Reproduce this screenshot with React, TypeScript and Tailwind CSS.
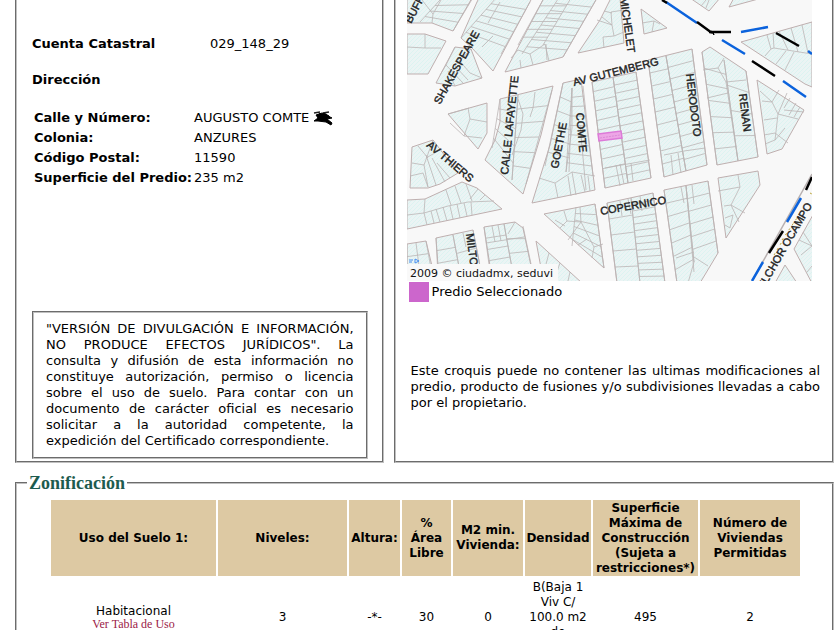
import React from "react";

type Point = [number, number];

// [start of side A, end of side A, start of side B, end of side B, number of lots]
type Strip = [Point, Point, Point, Point, number];

const blocks = [
  "407,-2 472,-2 453,31 432,23 407,23",
  "407,34 425,34 446,41 428,74 407,74",
  "455,47 471,49 482,78 455,86 436,83",
  "477,2 479,-2 532,-2 493,71 472,48 461,38",
  "544,-2 597,-2 563,57 541,63 505,72",
  "578,53 600,20 611,-2 620,-2 624,43",
  "641,9 667,28 644,34",
  "690,-2 709,11 720,-2",
  "729,7 734,-2 762,-2",
  "741,42 812,22 812,87 805,84",
  "448,114 487,103 487,133 478,149",
  "500,99 553,86 541,135 523,194 485,160 495,140 500,122",
  "563,83 581,79 586,120 595,190 532,203 550,145",
  "592,82 636,72 651,178 605,188",
  "648,60 692,49 707,165 664,177",
  "702,52 710,47 746,71 758,157 717,165",
  "757,80 804,110 782,149 767,154",
  "718,178 758,171 760,185 726,238",
  "664,190 708,181 718,253 700,283 677,283",
  "607,203 653,193 665,283 617,283",
  "544,214 595,204 604,268",
  "536,241 582,283 556,283 541,268",
  "484,227 515,222 523,228 531,266 490,266",
  "436,238 473,230 480,266 438,266",
  "407,244 426,241 432,266 407,266",
  "407,200 425,199 462,182 477,188 502,209 407,229",
  "412,147 433,140 458,173 440,184 428,188 410,188",
  "814,213 794,249 814,287",
  "785,265 797,283 775,283",
];

const strips: Strip[] = [
  [[440, 0], [420, 22], [474, -4], [453, 31], 4],
  [[496, -2], [461, 38], [530, 2], [501, 54], 7],
  [[560, -4], [522, 54], [596, 0], [563, 57], 8],
  [[544, -2], [518, 45], [571, -2], [543, 45], 6],
  [[500, 99], [492, 148], [518, 95], [512, 180], 5],
  [[518, 95], [512, 180], [552, 90], [526, 184], 6],
  [[563, 83], [545, 166], [572, 88], [569, 172], 6],
  [[572, 88], [566, 172], [583, 86], [593, 176], 9],
  [[592, 82], [605, 188], [613, 77], [628, 183], 11],
  [[613, 77], [628, 183], [636, 72], [651, 178], 13],
  [[648, 60], [664, 177], [666, 56], [686, 171], 9],
  [[666, 56], [686, 171], [692, 49], [707, 165], 10],
  [[702, 52], [717, 165], [724, 60], [738, 161], 7],
  [[724, 60], [738, 161], [746, 71], [758, 157], 4],
  [[664, 190], [677, 283], [686, 186], [694, 272], 7],
  [[686, 186], [694, 262], [708, 181], [718, 253], 6],
  [[607, 203], [617, 283], [631, 198], [640, 283], 5],
  [[631, 198], [640, 283], [653, 193], [665, 283], 13],
  [[484, 227], [490, 272], [504, 224], [512, 268], 4],
  [[504, 224], [512, 268], [523, 226], [531, 264], 3],
  [[436, 238], [438, 276], [453, 235], [460, 272], 3],
  [[453, 235], [460, 272], [473, 230], [480, 266], 2],
  [[407, 244], [407, 282], [426, 241], [433, 279], 3],
  [[576, 207], [572, 246], [595, 204], [604, 268], 6],
];

const lotLines = [
  "M422 0L433 14L432 23M433 14L441 0",
  "M425 34V48M407 47L425 48L441 48",
  "M455 47L446 65L463 83M471 49L455 66L468 80M446 65L440 75M458 59L470 73L482 78M448 71L455 86",
  "M482 47L493 36M500 2L488 23",
  "M518 50L530 54L533 65M518 50L511 58M530 54L545 44L549 61M546 44L547 60M521 68L520 60",
  "M597 20L612 25L614 36L603 37L604 48M612 25L611 12L624 10M614 36L624 32M602 17L612 25M612 13L604 11",
  "M642 23L654 21L652 32M654 21L660 24",
  "M701 6L706 0M709 0L706 8",
  "M767 35L771 49L765 56M773 33L774 48L771 49M774 48L812 54M786 51L776 64M794 52L785 70M779 31L788 50M791 28L798 52M802 25L808 53",
  "M468 108L470 119L464 136M470 119L487 122M464 136L450 123M464 136L482 138M469 108L448 114",
  "M518 99L523 114L521 130L512 155M535 92L533 108L530 117",
  "M580 125L586 190M572 88V128L566 172M539 178L555 183L558 198M555 183L572 172L595 176M572 172L576 195M568 176L571 196M581 175L585 192M588 176L590 191",
  "M613 77L628 183M605 168L650 160M620 164L624 184M616 165L620 186M631 163L633 181",
  "M666 56L686 171M664 155L684 151L705 148M671 155L673 175M678 153L681 173",
  "M703 70L718 68L724 58M718 68L726 82L746 80M726 82L738 161M707 98L728 93",
  "M762 101L772 102L779 90M772 102L778 114L775 140L785 128M778 114L798 119M778 114L787 93M784 110L804 112M764 135L775 133L788 143M764 120L777 118M790 98L784 108M796 103L789 115M800 107L794 117M760 91L772 102M765 144L775 140",
  "M718 191L740 187L738 175M740 187L731 205M731 205L745 213M724 206L731 205L739 222M725 218L733 215L730 228M725 225L730 228",
  "M681 187L684 203M692 185L694 204M686 186L694 262L688 283M694 257L708 266M676 258L694 252",
  "M620 201L622 216M628 199L631 214M640 196L642 211",
  "M564 211L567 221L581 222L580 207M567 221L560 228M581 222L568 240M581 222L594 247L592 258M594 247L603 244M578 245L587 239M555 220L565 226",
  "M549 253L545 268M560 263L554 280M570 272L568 281",
  "M492 226L495 242M498 225L501 241M515 222L508 234M486 243L524 237",
  "M463 233L466 247M416 243L419 266",
  "M425 199L424 213L407 215M424 213L448 206L468 202L494 201M446 190L451 205M455 186L461 203M466 184L472 201M478 189L470 199M485 195L480 200M424 213L427 225M431 211L434 223M436 209L440 222M443 207L447 221M450 206L453 219M457 204L460 218M464 203L467 216M471 202L472 215",
  "M412 163L424 165L433 140M410 176L423 173L428 187M424 165L428 187M426 155L436 185M432 158L445 182M440 150L426 158M418 146L428 158M437 163L450 178",
  "M803 232L812 246L801 255M799 240L812 246M807 272L812 266",
];

const labels = [
  { name: "BUFFON", x: 411, y: 24, angle: -62 },
  { name: "SHAKESPEARE", x: 440, y: 105, angle: -61 },
  { name: "MICHELET", x: 620, y: -2, angle: 82 },
  { name: "AV GUTEMBERG", x: 574, y: 86, angle: -14 },
  { name: "CALLE LAFAYETTE", x: 508, y: 175, angle: -84 },
  { name: "GOETHE", x: 558, y: 169, angle: -79 },
  { name: "COMTE", x: 576, y: 113, angle: 85 },
  { name: "HERODOTO", x: 686, y: 74, angle: 83 },
  { name: "RENAN", x: 739, y: 94, angle: 83 },
  { name: "AV THIERS", x: 426, y: 146, angle: 40 },
  { name: "COPERNICO", x: 601, y: 215, angle: -10 },
  { name: "MILTON", x: 466, y: 234, angle: 82 },
  { name: "MELCHOR OCAMPO", x: 759, y: 298, angle: -60 },
];

const lerp = (a: Point, b: Point, t: number): string =>
  `${a[0] + (b[0] - a[0]) * t} ${a[1] + (b[1] - a[1]) * t}`;

const stripPath = ([a1, a2, b1, b2, count]: Strip) => {
  let d = `M${a1.join(" ")}L${a2.join(" ")}M${b1.join(" ")}L${b2.join(" ")}`;
  for (let i = 1; i < count; i++) {
    d += `M${lerp(a1, a2, i / count)}L${lerp(b1, b2, i / count)}`;
  }
  return d;
};

const ParcelMap: React.FC = () => (
  <svg
    viewBox="407 0 405 281"
    role="img"
    aria-label="Croquis del predio"
    className="block w-full max-w-[405px] bg-[#f8f8f8]"
  >
    <defs>
      <pattern id="hatch" width="4" height="4" patternUnits="userSpaceOnUse">
        <rect width="4" height="4" fill="#ebf4f4" />
        <path d="M0 4L4 0" stroke="#dcf3f1" strokeWidth="1" />
      </pattern>
    </defs>

    {/* Manzanas y lotes */}
    <g fill="url(#hatch)" stroke="#bfafaf" strokeWidth="1">
      {blocks.map((points) => (
        <polygon key={points} points={points} />
      ))}
    </g>
    <g fill="none" stroke="#bbb5b5" strokeWidth="0.8">
      {strips.map((strip, i) => (
        <path key={i} d={stripPath(strip)} />
      ))}
      {lotLines.map((d) => (
        <path key={d} d={d} />
      ))}
    </g>

    {/* Predio seleccionado */}
    <polygon points="598,134 621,131 622,138 599,141" fill="#eda6e6" stroke="#dc7ad8" strokeWidth="1.5" />
    <path d="M600 138L620 135" stroke="#d98bd6" strokeDasharray="2 1" />

    {/* Límites */}
    <path d="M812 174L752 281" stroke="#b8b0b0" strokeWidth="1.5" />
    <g fill="none" strokeWidth="2.5">
      <path
        d="M666 2L697 23M741 32L768 27M722 40L745 54M783 81L806 97M808 51L812 54M801 198L787 222M763 262L752 281"
        stroke="#0b62dc"
      />
      <path
        d="M662 0L667 3M697 22L712 33M709 32H731M776 33L799 46M752 61L775 76M812 177L806 190M783 231L769 253"
        stroke="#000"
      />
    </g>
    <path d="M711 31L714 35L713 32Z" stroke="#000" />
    <path d="M810 193L812 194M782 240L797 218M774 255L783 240" stroke="#b9a43a" strokeDasharray="2 4" />

    <g className="font-['Liberation_Sans'] text-[11px]" fill="#222" stroke="#222" strokeWidth="0.4">
      {labels.map(({ name, x, y, angle }) => (
        <text key={name} transform={`translate(${x} ${y}) rotate(${angle})`}>
          {name}
        </text>
      ))}
    </g>

    <path d="M409 260H413M409 262H412M415 259L419 261L415 263Z" stroke="#4a90f0" fill="none" />
    <rect x="407" y="264" width="151" height="17" fill="#f9f9f9" />
    <text x="410" y="277" fill="#111" className="font-['DejaVu_Sans'] text-[11px]">
      2009 © ciudadmx, seduvi
    </text>
  </svg>
);

const Scribble: React.FC = () => (
  <svg viewBox="0 0 20 16" aria-hidden="true" className="inline-block h-4 w-5 align-middle">
    <path
      d="M1 3L7 2M10 3L16 2M16 6H12M7 3L5 7"
      fill="none"
      stroke="#222"
      strokeWidth="1.5"
    />
    <path
      d="M3 5L9 3L13 4L17 7L19 8L14 9L19 13L18 15L13 12L5 11L1 11L5 8Z"
      fill="#000"
      stroke="#000"
    />
  </svg>
);

const address = [
  { label: "Calle y Número:", value: "AUGUSTO COMTE", hidden: true },
  { label: "Colonia:", value: "ANZURES" },
  { label: "Código Postal:", value: "11590" },
  { label: "Superficie del Predio:", value: "235 m2" },
];

const columns = [
  { title: "Uso del Suelo 1:", width: "w-[165px]" },
  { title: "Niveles:", width: "w-[129px]" },
  { title: "Altura:", width: "w-[51px]" },
  { title: "%\nÁrea\nLibre", width: "w-[49px]" },
  { title: "M2 min. Vivienda:", width: "w-[70px]" },
  { title: "Densidad", width: "w-[66px]" },
  { title: "Superficie Máxima de Construcción (Sujeta a restricciones*)", width: "w-[105px]" },
  { title: "Número de Viviendas Permitidas", width: "w-[100px]" },
];

const App: React.FC = () => {
  return (
    <div className="h-screen overflow-hidden bg-white pl-[15px] pr-[6px] font-['DejaVu_Sans',Verdana,sans-serif] text-[13px] leading-4 text-black">
      <div className="flex gap-[10px]">
        {/* Información general */}
        <section className="flex w-[45%] flex-col border-2 border-t-0 border-[#c0c0c0] [border-style:groove] pb-[2px] pl-[15px] pr-[14px]">
          <dl className="mt-9 flex">
            <dt className="w-[178px] font-bold">Cuenta Catastral</dt>
            <dd>029_148_29</dd>
          </dl>
          <h2 className="mt-5 font-bold">Dirección</h2>

          <table className="ml-[2px] mt-5 border-collapse self-start">
            <tbody>
              {address.map((row) => (
                <tr key={row.label} className="h-5">
                  <th scope="row" className="whitespace-nowrap p-0 pr-[2px] text-left font-bold">
                    {row.label}
                  </th>
                  <td className="whitespace-nowrap p-0">
                    {row.value} {row.hidden && <Scribble />}
                  </td>
                </tr>
              ))}
            </tbody>
          </table>

          <p className="mt-auto border-2 border-[#c0c0c0] [border-style:groove] px-3 pb-2 pt-2 text-justify">
            "VERSIÓN DE DIVULGACIÓN E INFORMACIÓN, NO PRODUCE EFECTOS JURÍDICOS". La consulta y
            difusión de esta información no constituye autorización, permiso o licencia sobre el uso
            de suelo. Para contar con un documento de carácter oficial es necesario solicitar a la
            autoridad competente, la expedición del Certificado correspondiente.
          </p>
        </section>

        {/* Ubicación */}
        <section className="flex-1 border-2 border-t-0 border-[#c0c0c0] [border-style:groove] pb-[50px] pl-[11px] pr-3">
          <ParcelMap />
          <div className="ml-[2px] mt-px flex items-center gap-[3px]">
            <span className="size-5 bg-[#cc66cc]" />
            Predio Seleccionado
          </div>
          <p className="ml-1 mt-[61px] text-justify">
            Este croquis puede no contener las ultimas modificaciones al predio, producto de
            fusiones y/o subdivisiones llevadas a cabo por el propietario.
          </p>
        </section>
      </div>

      <fieldset className="mt-2 min-w-0 border-2 border-b-0 border-[#c0c0c0] [border-style:groove] px-8 pb-4">
        <legend className="-ml-[22px] px-[2px] font-['Liberation_Serif'] text-[18px] font-bold leading-6 text-[#1d5b4f]">
          Zonificación
        </legend>
        <table className="mt-[5px] w-full max-w-[753px] table-fixed border-separate border-spacing-x-[2px] border-spacing-y-0 text-center text-[12px] leading-[15px]">
          <thead>
            <tr className="h-[76px]">
              {columns.map((col) => (
                <th
                  key={col.title}
                  scope="col"
                  className={`${col.width} whitespace-pre-line bg-[#ddc9a3] p-0 font-bold`}
                >
                  {col.title}
                </th>
              ))}
            </tr>
          </thead>
          <tbody>
            <tr>
              <td className="p-0 leading-[13px]">
                Habitacional
                <br />
                <a href="#tabla-de-uso" className="font-['Liberation_Serif'] text-[#9b2247]">
                  Ver Tabla de Uso
                </a>
              </td>
              <td className="p-0">3</td>
              <td className="p-0">-*-</td>
              <td className="p-0">30</td>
              <td className="p-0">0</td>
              <td className="px-1 py-1">B(Baja 1 Viv C/ 100.0 m2 de terreno)</td>
              <td className="p-0">495</td>
              <td className="p-0">2</td>
            </tr>
          </tbody>
        </table>
      </fieldset>
    </div>
  );
};

export default App;
